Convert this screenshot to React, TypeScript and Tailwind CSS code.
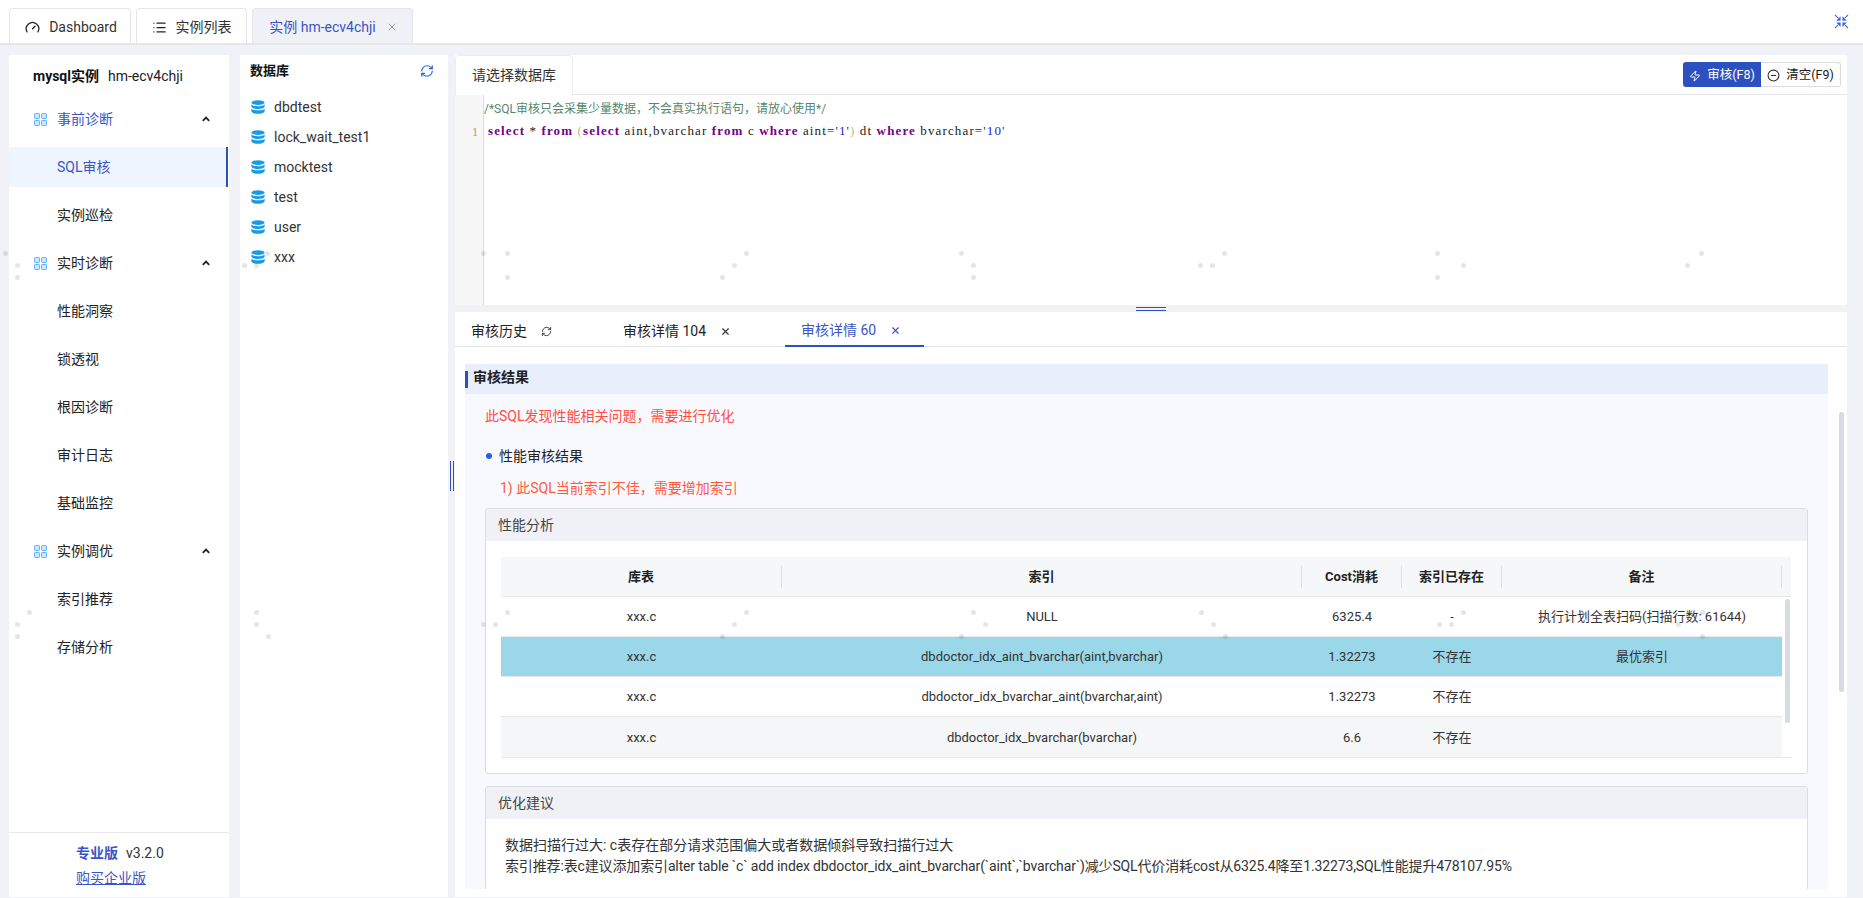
import React from "react";
import { Gauge, List, X, RefreshCw, MinusCircle, Zap } from "lucide-react";

const dots: [number, number][] = [
  [5, 253], [17, 265], [17, 277], [267, 253], [244, 265], [256, 265],
  [483, 253], [507, 253], [507, 277], [722, 277], [734, 265], [746, 253],
  [961, 253], [973, 265], [973, 277], [1200, 265], [1212, 265], [1224, 253],
  [1437, 253], [1463, 265], [1437, 277], [1687, 265], [1701, 253],
  [29, 612], [17, 624], [17, 636], [256, 612], [256, 624], [268, 636],
  [483, 624], [495, 624], [507, 612], [722, 636], [734, 624], [746, 612],
  [961, 636], [973, 612], [985, 624], [1201, 612], [1213, 624], [1225, 636],
  [1463, 612], [1439, 624], [1451, 624], [1702, 612], [1678, 624], [1702, 636],
];

function GridIcon() {
  return (
    <svg width="13" height="13" viewBox="0 0 13 13">
      {[0, 7].map((x) =>
        [0, 7].map((y) => (
          <rect key={`${x}-${y}`} x={x + 0.5} y={y + 0.5} width="5" height="5" rx="0.8" fill="#cfe6ff" stroke="#5fb0ff" />
        ))
      )}
    </svg>
  );
}

function DbIcon() {
  return (
    <svg width="14" height="14" viewBox="0 0 14 14" fill="#1a9ae0">
      <ellipse cx="7" cy="2.6" rx="6.6" ry="2.4" />
      <path d="M.4 4.2C1.4 5.6 4 6.2 7 6.2s5.6-.6 6.6-2v2.6C12.8 8.3 10 9 7 9S1.2 8.3.4 6.8z" />
      <path d="M.4 8.4C1.4 9.8 4 10.3 7 10.3s5.6-.5 6.6-1.9v3c-.8 1.5-3.6 2.3-6.6 2.3S1.2 12.9.4 11.4z" />
    </svg>
  );
}

function ChevronSolid() {
  return (
    <svg width="8" height="6" viewBox="0 0 8 6" fill="none" stroke="#222" strokeWidth="1.8">
      <path d="M.8 4.8 4 1.6l3.2 3.2" />
    </svg>
  );
}

function CompressIcon() {
  return (
    <svg width="15" height="15" viewBox="0 0 16 16" fill="#3f62d2" stroke="#3f62d2" strokeWidth="1.1">
      <path d="M1 1 4.500 4.500" />
      <path d="M15 1 11.500 4.500" />
      <path d="M1 15 4.500 11.500" />
      <path d="M15 15 11.500 11.500" />
      <path d="M6.800 6.800V2.800L2.800 6.800z" strokeWidth="0.4" />
      <path d="M9.200 6.800V2.800L13.200 6.800z" strokeWidth="0.4" />
      <path d="M6.800 9.200V13.200L2.800 9.200z" strokeWidth="0.4" />
      <path d="M9.200 9.200V13.200L13.200 9.200z" strokeWidth="0.4" />
    </svg>
  );
}

function MenuGroup({ label, active }: { label: string; active?: boolean }) {
  return (
    <div className="flex h-[48px] items-center pl-[25px] pr-[19px]">
      <GridIcon />
      <span className={`ml-[10px] flex-1 ${active ? "text-[#3b55c6]" : "text-[#222]"}`}>{label}</span>
      <ChevronSolid />
    </div>
  );
}

function MenuItem({ label, active }: { label: string; active?: boolean }) {
  if (active) {
    return (
      <div className="my-[4px] mr-px flex h-[40px] items-center border-r-[2px] border-[#2d50c0] bg-[#eff5ff] pl-[48px] text-[#3b55c6]">
        {label}
      </div>
    );
  }
  return <div className="flex h-[48px] items-center pl-[48px] text-[#222]">{label}</div>;
}

function Sidebar() {
  return (
    <aside className="flex w-[220px] shrink-0 flex-col bg-white text-[14px]">
      <div className="flex h-[40px] items-center pl-[24px] pt-[2px] text-[14px] text-[#222]">
        <b className="font-bold text-[#111]">mysql实例</b>
        <span className="ml-[9px]">hm-ecv4chji</span>
      </div>
      <MenuGroup label="事前诊断" active />
      <MenuItem label="SQL审核" active />
      <MenuItem label="实例巡检" />
      <MenuGroup label="实时诊断" />
      <MenuItem label="性能洞察" />
      <MenuItem label="锁透视" />
      <MenuItem label="根因诊断" />
      <MenuItem label="审计日志" />
      <MenuItem label="基础监控" />
      <MenuGroup label="实例调优" />
      <MenuItem label="索引推荐" />
      <MenuItem label="存储分析" />
      <div className="mt-auto h-[65px] border-t border-[#e9e9ec] pl-[67px] pt-[8px] leading-[25px]">
        <div>
          <b className="font-bold text-[#3b55c6]">专业版</b>
          <span className="ml-[8px] text-[#333]">v3.2.0</span>
        </div>
        <a className="text-[#3b55c6] underline">购买企业版</a>
      </div>
    </aside>
  );
}

function DbPanel() {
  const names = ["dbdtest", "lock_wait_test1", "mocktest", "test", "user", "xxx"];
  return (
    <section className="ml-[11px] w-[208px] shrink-0 bg-white text-[14px] text-[#333]">
      <div className="flex h-[32px] items-center justify-between pl-[10px] pr-[14px]">
        <b className="text-[13px] font-bold text-[#111]">数据库</b>
        <RefreshCw size={14} color="#2d62d8" />
      </div>
      <div className="pt-[5px]">
        {names.map((n) => (
          <div key={n} className="flex h-[30px] items-center pl-[11px]">
            <DbIcon />
            <span className="ml-[9px]">{n}</span>
          </div>
        ))}
      </div>
    </section>
  );
}

function Editor() {
  const kw = "font-bold text-[#770088]";
  return (
    <section className="flex h-[250px] shrink-0 flex-col bg-white">
      <div className="flex h-[40px] shrink-0 items-center justify-between border-b border-[#e6e6e8]">
        <div className="flex h-[40px] w-[118px] items-center justify-center rounded-t-[4px] border-x border-t border-[#eeeeee] bg-white text-[14px] text-[#333]">
          请选择数据库
        </div>
        <div className="mr-[6px] flex h-[25px] text-[12.500px]">
          <div className="flex w-[78px] items-center justify-center gap-[6px] rounded-l-[3px] bg-[#2d50c0] pt-[2px] text-white">
            <Zap size={12} color="#ffffff" />
            审核(F8)
          </div>
          <div className="flex w-[80px] items-center justify-center gap-[6px] rounded-r-[3px] border border-l-0 border-[#dcdcdc] pt-[2px] text-[#222]">
            <MinusCircle size={13} color="#333" />
            清空(F9)
          </div>
        </div>
      </div>
      <div className="flex flex-1">
        <div className="w-[29px] shrink-0 border-r border-[#dddddd] bg-[#f7f7f7] pr-[5px] pt-[26px] text-right font-['Liberation_Serif',serif] text-[12px] leading-[22px] text-[#999]">
          1
        </div>
        <div className="pt-[3px] text-[12px] leading-[22px]">
          <div className="text-[#56876c]">/*SQL审核只会采集少量数据，不会真实执行语句，请放心使用*/</div>
          <div className="ml-[4px] whitespace-pre font-['Liberation_Serif',serif] text-[13px] tracking-[1.130px] text-[#222]">
            <span className={kw}>select</span> * <span className={kw}>from</span>{" "}
            <span className="text-[#c9b98f]">(</span>
            <span className={kw}>select</span> aint,bvarchar <span className={kw}>from</span> c{" "}
            <span className={kw}>where</span> aint=<span className="text-[#2222dd]">'1'</span>
            <span className="text-[#c9b98f]">)</span> dt <span className={kw}>where</span> bvarchar=
            <span className="text-[#2222dd]">'10'</span>
          </div>
        </div>
      </div>
    </section>
  );
}

const columns = "grid grid-cols-[281px_520px_100px_100px_280px]";

const rows = [
  { idx: "NULL", cost: "6325.4", ex: "-", note: "执行计划全表扫码(扫描行数: 61644)", bg: "bg-white" },
  { idx: "dbdoctor_idx_aint_bvarchar(aint,bvarchar)", cost: "1.32273", ex: "不存在", note: "最优索引", bg: "bg-[#9ad8e9]" },
  { idx: "dbdoctor_idx_bvarchar_aint(bvarchar,aint)", cost: "1.32273", ex: "不存在", note: "", bg: "bg-white" },
  { idx: "dbdoctor_idx_bvarchar(bvarchar)", cost: "6.6", ex: "不存在", note: "", bg: "bg-[#f5f6f8]" },
];

function PerfTable() {
  return (
    <div className="relative ml-[15px] mr-[16px] mt-[16px] border-b border-[#e9e9ec] text-[13px] text-[#333]">
      <div className={`${columns} h-[40px] items-center border-b border-[#e9e9ec] bg-[#f6f7f9] font-bold text-[#222]`}>
        {["库表", "索引", "Cost消耗", "索引已存在", "备注"].map((h) => (
          <div key={h} className="flex h-[22px] items-center justify-center border-r border-[#e0e0e3]">
            {h}
          </div>
        ))}
      </div>
      {rows.map((r, i) => (
        <div
          key={r.idx}
          className={`${columns} ${r.bg} mr-[9px] h-[40px] items-center pt-px text-center ${i < rows.length - 1 ? "border-b border-[#e9e9ec]" : ""}`}
        >
          <div>xxx.c</div>
          <div>{r.idx}</div>
          <div>{r.cost}</div>
          <div>{r.ex}</div>
          <div>{r.note}</div>
        </div>
      ))}
      <div className="absolute right-[1px] top-[42px] h-[124px] w-[5px] rounded-full bg-[#d7dae2]" />
    </div>
  );
}

function ResultPane() {
  return (
    <div className="relative ml-[10px] mt-[17px] w-[1363px] text-[14px]">
      <div className="flex h-[30px] items-center bg-[#e9eefc]">
        <div className="h-[17px] w-[3px] bg-[#2d50c0]" />
        <b className="mb-[3px] ml-[5px] text-[14px] font-bold text-[#222]">审核结果</b>
      </div>
      <div className="bg-[#f8f9ff] px-[20px] pb-[30px]">
        <div className="pt-[12px] leading-[20px] text-[#ff4d3f]">此SQL发现性能相关问题，需要进行优化</div>
        <div className="mt-[20px] flex h-[20px] items-center text-[#222]">
          <span className="ml-[1px] h-[6px] w-[6px] rounded-full bg-[#2a5cf0]" />
          <span className="ml-[7px]">性能审核结果</span>
        </div>
        <div className="ml-[15px] mt-[12px] leading-[20px] text-[#ff5a3c]">1) 此SQL当前索引不佳，需要增加索引</div>
        <div className="mt-[10px] h-[266px] rounded-[3px] border border-[#dcdde2] bg-white">
          <div className="flex h-[32px] items-center bg-[#f0f1f6] pl-[12px] text-[14px] text-[#444]">性能分析</div>
          <PerfTable />
        </div>
        <div className="mt-[12px] rounded-[3px] border border-[#dcdde2] bg-white pb-[30px]">
          <div className="flex h-[32px] items-center bg-[#f0f1f6] pl-[12px] text-[14px] text-[#444]">优化建议</div>
          <div className="pl-[19px] pt-[16px] leading-[21px] text-[#333]">
            <div>数据扫描行过大: c表存在部分请求范围偏大或者数据倾斜导致扫描行过大</div>
            <div className="tracking-[-0.140px]">索引推荐:表c建议添加索引alter table `c` add index dbdoctor_idx_aint_bvarchar(`aint`,`bvarchar`)减少SQL代价消耗cost从6325.4降至1.32273,SQL性能提升478107.95%</div>
          </div>
        </div>
      </div>
    </div>
  );
}

function Bottom() {
  return (
    <section className="relative flex min-h-0 flex-1 flex-col bg-white">
      <div className="flex h-[35px] shrink-0 border-b border-[#e6e6e8] text-[14px] text-[#222]">
        <div className="ml-[16px] flex w-[152px] items-center pt-[4px]">
          审核历史
          <RefreshCw size={11} className="ml-[14px]" color="#333" />
        </div>
        <div className="flex w-[162px] items-center pt-[4px]">
          审核详情 104
          <X size={11} strokeWidth={2.500} className="ml-[14px]" color="#333" />
        </div>
        <div className="-mb-px flex w-[139px] items-center border-b-[2px] border-[#2d50c0] pl-[16px] pt-[4px] text-[#3b55c6]">
          审核详情 60
          <X size={11} strokeWidth={2.500} className="ml-[14px]" color="#3b55c6" />
        </div>
      </div>
      <div className="relative mb-[8px] min-h-0 flex-1 overflow-hidden">
        <ResultPane />
        <div className="absolute right-[3px] top-[65px] h-[280px] w-[5px] rounded-full bg-[#d7dae2]" />
      </div>
    </section>
  );
}

export default function App() {
  return (
    <div className="relative flex h-[898px] w-full flex-col overflow-hidden bg-[#f0f2f7] font-['Roboto','Noto_Sans_CJK_SC',sans-serif]">
      <header className="flex h-[45px] shrink-0 items-end justify-between border-b-[2px] border-[#e6e6e8] bg-white pl-[9px] text-[14px]">
        <div className="flex gap-[5px]">
          <div className="flex h-[35px] w-[122px] items-center justify-center gap-[9px] rounded-t-[4px] border-x border-t border-[#e6e6e8] pl-[2px] pt-[2px] text-[#333]">
            <Gauge size={15} color="#222" />
            Dashboard
          </div>
          <div className="flex h-[35px] w-[111px] items-center justify-center gap-[9px] rounded-t-[4px] border-x border-t border-[#e6e6e8] pt-[2px] text-[#333]">
            <List size={15} color="#222" />
            实例列表
          </div>
          <div className="flex h-[35px] w-[161px] items-center justify-center gap-[10px] rounded-t-[4px] border-x border-t border-[#e6e6e8] bg-[#f0f1f6] pl-[2px] pt-[2px] text-[#3b55c6]">
            实例 hm-ecv4chji
            <X size={12} color="#999" />
          </div>
        </div>
        <div className="mb-[14px] mr-[14px] self-end">
          <CompressIcon />
        </div>
      </header>
      <main className="flex min-h-0 flex-1 pb-px pl-[9px] pr-[16px] pt-[10px]">
        <Sidebar />
        <DbPanel />
        <div className="ml-[7px] flex min-w-0 flex-1 flex-col gap-[7px]">
          <Editor />
          <Bottom />
        </div>
      </main>
      {/* handles */}
      <div className="absolute left-[450px] top-[461px] h-[30px] w-[4px] border-x border-[#2d50c0]" />
      <div className="absolute left-[1136px] top-[307px] h-[4px] w-[30px] border-y border-[#2d50c0]" />
      {/* watermark */}
      {dots.map(([x, y]) => (
        <span
          key={`${x}-${y}`}
          className="pointer-events-none absolute h-[5px] w-[5px] rounded-full bg-black/10"
          style={{ left: x - 2, top: y - 2 }}
        />
      ))}
    </div>
  );
}
